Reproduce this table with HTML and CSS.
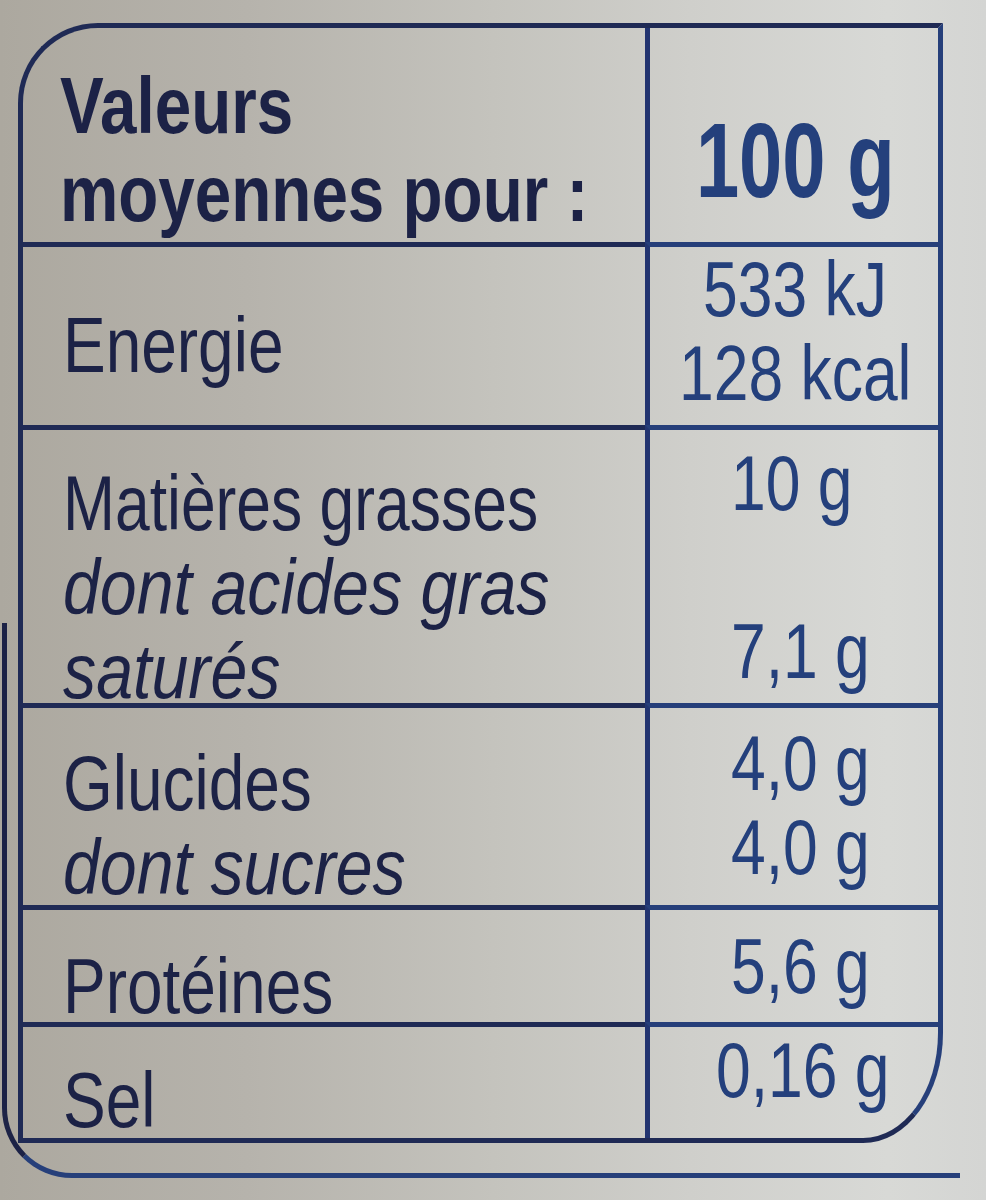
FILE: index.html
```html
<!DOCTYPE html>
<html lang="fr">
<head>
<meta charset="utf-8">
<title>Valeurs nutritionnelles</title>
<link rel="stylesheet" href="styles.css">
</head>
<body>
<div class="frame">
  <div class="table">
    <div class="cell label head">
      <div><span class="t">Valeurs</span></div>
      <div><span class="t">moyennes pour :</span></div>
    </div>
    <div class="cell value head-value"><span class="t big">100 g</span></div>

    <div class="cell label row-energy"><span class="t">Energie</span></div>
    <div class="cell value val-energy">
      <div><span class="t">533 kJ</span></div>
      <div><span class="t">128 kcal</span></div>
    </div>

    <div class="cell label row-fat">
      <div><span class="t narrow">Matières grasses</span></div>
      <div class="it"><span class="t">dont acides gras</span></div>
      <div class="it"><span class="t">saturés</span></div>
    </div>
    <div class="cell value val-fat">
      <div><span class="t">10 g</span></div>
      <div class="gap"><span class="t">7,1 g</span></div>
    </div>

    <div class="cell label row-carb">
      <div><span class="t">Glucides</span></div>
      <div class="it"><span class="t">dont sucres</span></div>
    </div>
    <div class="cell value val-carb">
      <div><span class="t">4,0 g</span></div>
      <div><span class="t">4,0 g</span></div>
    </div>

    <div class="cell label row-prot"><span class="t">Protéines</span></div>
    <div class="cell value val-prot"><span class="t">5,6 g</span></div>

    <div class="cell label row-salt"><span class="t">Sel</span></div>
    <div class="cell value val-salt"><span class="t">0,16 g</span></div>
  </div>
</div>
</body>
</html>
```

FILE: styles.css
```css
html, body {
  margin: 0;
  padding: 0;
}
body {
  width: 986px;
  height: 1200px;
  overflow: hidden;
  background: linear-gradient(90deg, #aca89f 0%, #b6b3ac 25%, #c4c3bd 50%, #cfcfcb 70%, #d8d9d6 90%, #d4d5d3 100%);
  font-family: "Liberation Sans", Arial, sans-serif;
  color: #1c2246;
}
.frame {
  position: relative;
  margin: 23px 0 0 18px;
  width: 925px;
  padding-bottom: 35px;
}
.frame::after {
  content: "";
  position: absolute;
  left: -16px;
  top: 600px;
  bottom: 0;
  width: 958px;
  border-left: 5px solid #1c2246;
  border-bottom: 5px solid #263f7a;
  border-bottom-left-radius: 70px;
  box-sizing: border-box;
}
.table {
  display: grid;
  grid-template-columns: 622px 1fr;
  grid-template-rows: 214px 183px 278px 202px 117px 116px;
  border: 5px solid #1f2a55;
  border-top-left-radius: 80px;
  border-bottom-right-radius: 80px 110px;
  border-right-color: #263f7a;
}
.cell {
  border-top: 5px solid #1f2a55;
  box-sizing: border-box;
  font-size: 78px;
  line-height: 84px;
  white-space: nowrap;
}
.t {
  display: inline-block;
  transform: scaleX(0.8);
  transform-origin: 0 0;
}
.label .t {
  transform: scaleX(0.82);
}
.label .it .t {
  transform: scaleX(0.85);
}
.label .t.narrow {
  transform: scaleX(0.8);
}
.head, .head-value {
  border-top: none;
}
.label {
  padding-left: 40px;
}
.value {
  border-left: 5px solid #223470;
  border-top-color: #263f7a;
  color: #24407c;
  padding-left: 81px;
}
.head {
  font-weight: bold;
  font-size: 79px;
  line-height: 88px;
  padding-top: 34px;
  padding-left: 37px;
}
.head .t {
  transform: scaleX(0.83);
}
.head-value {
  font-weight: bold;
  font-size: 105px;
  line-height: 105px;
  padding: 80px 0 0 0;
  text-align: center;
}
.head-value .t {
  transform: scaleX(0.74);
  transform-origin: 50% 0;
}
.it {
  font-style: italic;
}
.row-energy { padding-top: 56px; }
.val-energy { padding: 0; text-align: center; }
.val-energy .t { transform-origin: 50% 0; }
.row-fat { padding-top: 31px; }
.val-fat { padding-top: 11px; }
.val-fat .gap { margin-top: 84px; }
.row-carb { padding-top: 33px; }
.val-carb { padding-top: 13px; }
.row-prot { padding-top: 34px; }
.val-prot { padding-top: 14px; }
.row-salt { padding-top: 31px; }
.val-salt { padding-top: 1px; padding-left: 66px; }
```
